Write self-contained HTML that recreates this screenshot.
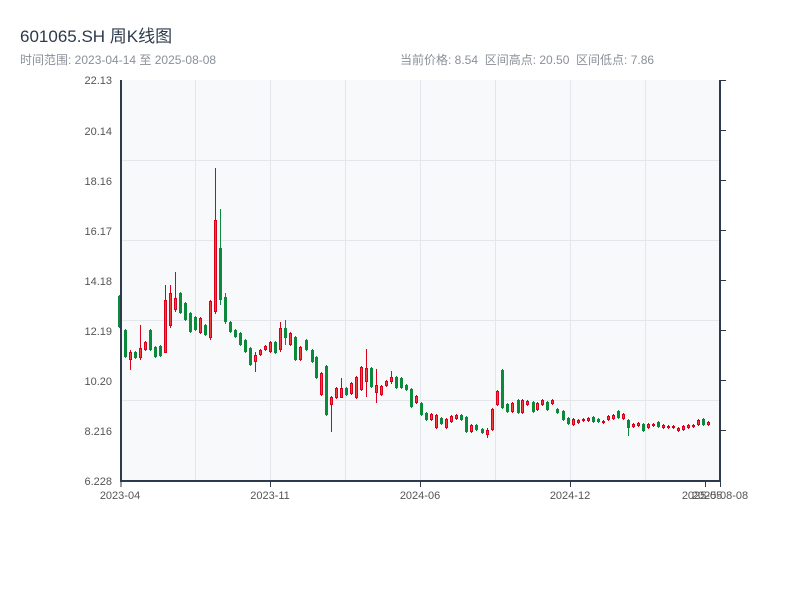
<!DOCTYPE html>
<html><head><meta charset="utf-8"><style>
body{margin:0;background:#fff;width:800px;height:600px;overflow:hidden;font-family:"Liberation Sans","Noto Sans CJK SC",sans-serif;}
.t{position:absolute;left:20px;top:22px;font-size:17px;color:#2c3a4b;}
.s{position:absolute;top:51px;font-size:12px;color:#8a9099;}
</style></head><body>
<div class="t">601065.SH 周K线图</div>
<div class="s" style="left:20px">时间范围: 2023-04-14 至 2025-08-08</div>
<div class="s" style="left:400px">当前价格: 8.54&nbsp;&nbsp;区间高点: 20.50&nbsp;&nbsp;区间低点: 7.86</div>
<svg id="c" width="800" height="600" style="position:absolute;left:0;top:0" font-family="Liberation Sans, sans-serif" font-size="11" fill="#555">
<rect x="121" y="80" width="599" height="400" fill="#f7f9fb"/>
<g stroke="#e3e6ea" stroke-width="1">
<line x1="121" y1="160.5" x2="720" y2="160.5"/><line x1="121" y1="240.5" x2="720" y2="240.5"/><line x1="121" y1="320.5" x2="720" y2="320.5"/><line x1="121" y1="400.5" x2="720" y2="400.5"/>
<line x1="195.5" y1="80" x2="195.5" y2="480"/><line x1="270.5" y1="80" x2="270.5" y2="480"/><line x1="345.5" y1="80" x2="345.5" y2="480"/><line x1="420.5" y1="80" x2="420.5" y2="480"/><line x1="495.5" y1="80" x2="495.5" y2="480"/><line x1="570.5" y1="80" x2="570.5" y2="480"/><line x1="645.5" y1="80" x2="645.5" y2="480"/>
</g>
<g id="k"></g>
<g stroke="#2c3a4b" stroke-width="2" fill="none">
<line x1="121" y1="80" x2="121" y2="481"/><line x1="120" y1="481" x2="721" y2="481"/><line x1="720" y1="80" x2="720" y2="481"/>
</g>
<g stroke="#2c3a4b" stroke-width="1">
<line x1="720" y1="80.5" x2="726" y2="80.5"/><line x1="720" y1="130.5" x2="726" y2="130.5"/><line x1="720" y1="180.5" x2="726" y2="180.5"/><line x1="720" y1="230.5" x2="726" y2="230.5"/><line x1="720" y1="280.5" x2="726" y2="280.5"/><line x1="720" y1="330.5" x2="726" y2="330.5"/><line x1="720" y1="380.5" x2="726" y2="380.5"/><line x1="720" y1="430.5" x2="726" y2="430.5"/>
<line x1="121" y1="481" x2="121" y2="487"/><line x1="270.5" y1="481" x2="270.5" y2="487"/><line x1="420.5" y1="481" x2="420.5" y2="487"/><line x1="570.5" y1="481" x2="570.5" y2="487"/><line x1="705.5" y1="481" x2="705.5" y2="487"/><line x1="720.5" y1="481" x2="720.5" y2="487"/>
</g>
<g text-anchor="end">
<text x="112" y="84">22.13</text><text x="112" y="135">20.14</text><text x="112" y="185">18.16</text><text x="112" y="235">16.17</text><text x="112" y="285">14.18</text><text x="112" y="335">12.19</text><text x="112" y="385">10.20</text><text x="112" y="435">8.216</text><text x="112" y="485">6.228</text>
</g>
<g text-anchor="middle">
<text x="120" y="499">2023-04</text><text x="270" y="499">2023-11</text><text x="420" y="499">2024-06</text><text x="570" y="499">2024-12</text><text x="702" y="499">2025-05</text><text x="720" y="499">2025-08-08</text>
</g>
</svg>
<script>
var d=[[119,296,327,'g'],[125,330,357,'g'],[130,352,360,'r',350,370],[135,352,358,'g'],[140,348,358,'r',325,360],[145,342,350,'r'],[150,330,350,'g'],[155,347,357,'g'],[160,346,356,'g'],[165,300,353,'r',285,353],[170,293,326,'r',285,328],[175,298,310,'r',272,312],[180,293,313,'g'],[185,303,320,'g'],[190,313,332,'g'],[195,317,330,'g'],[200,318,333,'r'],[205,325,335,'g'],[210,301,338,'r',300,340],[215,220,312,'r',168,314],[220,248,300,'g',209,305],[225,297,322,'g',293,324],[230,322,332,'g'],[235,330,337,'g'],[240,333,345,'g'],[245,340,352,'g'],[250,348,365,'g'],[255,355,362,'r',352,372],[260,350,355,'r'],[265,346,350,'r'],[270,342,352,'r'],[275,342,353,'g'],[280,328,350,'r',322,352],[285,328,338,'g',320,345],[290,333,345,'r'],[295,337,360,'g'],[300,347,360,'r'],[306,340,350,'g'],[312,350,362,'g'],[316,357,378,'g'],[321,373,395,'r',372,396],[326,366,415,'g'],[331,397,405,'r',396,432],[336,388,398,'r'],[341,388,398,'r',378,398],[346,388,395,'g'],[351,383,394,'r'],[356,377,398,'r'],[361,367,390,'r'],[366,368,382,'r',349,397],[371,368,387,'g'],[376,385,393,'r',369,403],[381,386,395,'r'],[386,381,386,'r'],[391,377,382,'r',371,384],[396,377,388,'g'],[401,378,388,'g'],[406,385,390,'g'],[411,389,407,'g'],[416,396,403,'r'],[421,403,415,'g'],[426,413,420,'g'],[431,414,420,'r'],[436,415,428,'r'],[441,418,424,'g'],[446,419,428,'r'],[451,416,422,'r'],[456,415,419,'r'],[461,415,420,'g'],[466,417,432,'g'],[471,425,432,'r'],[476,425,430,'g'],[482,429,433,'g'],[487,430,435,'r',428,438],[492,409,430,'r'],[497,391,405,'r'],[502,370,408,'g'],[507,404,412,'g'],[512,403,412,'r'],[518,400,413,'g'],[522,400,413,'r'],[527,401,405,'r'],[533,402,412,'g'],[537,403,410,'r'],[542,400,405,'r'],[547,402,410,'g'],[552,400,404,'r'],[557,409,413,'g'],[563,411,420,'g'],[568,418,424,'g'],[573,419,425,'r'],[578,420,423,'r'],[583,419,421,'r'],[588,418,421,'r'],[593,417,422,'g'],[598,419,422,'g'],[603,421,423,'r'],[608,416,420,'r'],[613,415,419,'r'],[618,411,418,'g'],[623,414,419,'r'],[628,420,428,'g',419,436],[633,424,427,'r'],[638,423,426,'r'],[643,424,431,'g'],[648,424,428,'r'],[653,424,426,'r'],[658,422,427,'g'],[663,425,428,'r'],[668,426,428,'r'],[673,426,428,'r'],[678,428,431,'r'],[683,426,430,'r'],[688,425,428,'r'],[693,425,427,'r'],[698,420,425,'r'],[703,419,425,'g'],[708,422,425,'r']];
var s='';
d.forEach(function(c){var x=c[0],t=c[1],b=c[2],g=c[3]=='g',wt=c[4]||t-1,wb=c[5]||b+1;
var col=g?'#0a8a3a':'#d9001b';
s+='<line x1="'+(x+0.5)+'" y1="'+wt+'" x2="'+(x+0.5)+'" y2="'+wb+'" stroke="'+col+'" stroke-width="1"/>';
if(b-t<2)b=t+2;
if(g)s+='<rect x="'+(x-1)+'" y="'+t+'" width="3" height="'+(b-t)+'" fill="'+col+'"/>';
else s+='<rect x="'+(x-0.5)+'" y="'+(t+0.5)+'" width="2" height="'+(b-t-1)+'" fill="#f04040" stroke="'+col+'" stroke-width="1"/>';});
document.getElementById('k').innerHTML=s;
</script>
</body></html>
